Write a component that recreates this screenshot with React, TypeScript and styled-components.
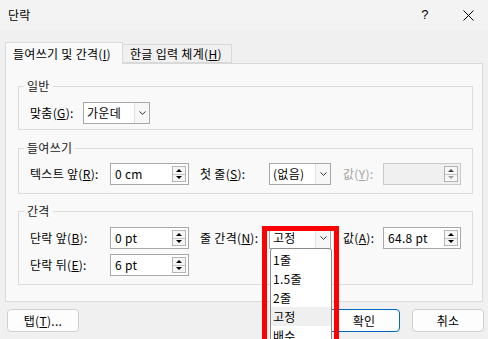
import React from 'react'
import styled, { createGlobalStyle } from 'styled-components'

const GlobalStyle = createGlobalStyle`
	html, body {
		margin: 0;
		padding: 0;
	}
	body {
		background: #f0f0f0;
		font-family: "Noto Sans CJK KR", "Noto Sans", sans-serif;
		font-size: 12px;
		line-height: 16px;
		letter-spacing: 0.3px;
		color: #000;
	}
`

const Dialog = styled.div`
	width: 488px;
	height: 339px;
	overflow: hidden;
	display: flex;
	flex-direction: column;
	background: #f0f0f0;
`

const TitleBar = styled.div`
	height: 30px;
	display: flex;
	align-items: center;
	padding-left: 8px;
	background: #f3f3f3;
`

const Title = styled.div`
	flex: 1;
	font-size: 12px;
`

const TitleButton = styled.div<{ $w: number }>`
	width: ${(p) => p.$w}px;
	height: 30px;
	display: flex;
	align-items: center;
	justify-content: center;
	font-size: 13px;
	font-family: "Liberation Sans", sans-serif;
`

const TabRow = styled.div`
	display: flex;
	align-items: flex-end;
	margin-top: 12px;
	padding-left: 5px;
	height: 21px;
	position: relative;
	z-index: 1;
`

const Tab = styled.div<{ $w: number; $active?: boolean }>`
	box-sizing: border-box;
	width: ${(p) => p.$w}px;
	height: ${(p) => (p.$active ? 22 : 19)}px;
	margin-bottom: ${(p) => (p.$active ? -1 : 0)}px;
	padding-left: 7px;
	display: flex;
	align-items: center;
	border: 1px solid #d9d9d9;
	border-bottom: ${(p) => (p.$active ? 'none' : '1px solid #d9d9d9')};
	border-left: ${(p) => (p.$active ? '1px solid #d9d9d9' : 'none')};
	background: ${(p) => (p.$active ? '#f9f9f9' : '#f0f0f0')};
	white-space: nowrap;
`

const Panel = styled.div`
	box-sizing: border-box;
	margin: 0 5px;
	height: 239px;
	border: 1px solid #d9d9d9;
	background: #f9f9f9;
	padding: 0 9px 0 12px;
	display: flex;
	flex-direction: column;
`

const Group = styled.fieldset<{ $top: number; $pt: number; $pb: number }>`
	margin: ${(p) => p.$top}px 0 0 0;
	padding: ${(p) => p.$pt}px 10px ${(p) => p.$pb}px 11px;
	border: 1px solid #dcdcdc;
	min-width: 0;
	display: flex;
	flex-direction: column;
	gap: 5px;
`

const Legend = styled.legend`
	margin-left: -6px;
	padding: 0 3px;
	line-height: 16px;
	color: #1a1a1a;
`

const Row = styled.div`
	display: flex;
	align-items: center;
	height: 22px;
`

const Label = styled.div<{ $w: number; $ml?: number; $disabled?: boolean }>`
	width: ${(p) => p.$w}px;
	margin-left: ${(p) => p.$ml ?? 0}px;
	color: ${(p) => (p.$disabled ? '#a3a3a3' : '#000')};
	white-space: nowrap;
`

const U = styled.span`
	text-decoration: underline;
	text-underline-offset: 1px;
`

const SpinBox = styled.div<{ $w: number; $disabled?: boolean }>`
	box-sizing: border-box;
	width: ${(p) => p.$w}px;
	height: 22px;
	padding: 2px;
	display: flex;
	align-items: center;
	border: 1px solid ${(p) => (p.$disabled ? '#c9c9c9' : '#a8a8a8')};
	background: ${(p) => (p.$disabled ? '#f0f0f0' : '#fff')};
`

const SpinText = styled.div`
	flex: 1;
	padding-left: 2px;
`

const SpinButtons = styled.div`
	box-sizing: border-box;
	width: 14px;
	height: 100%;
	display: flex;
	flex-direction: column;
	border: 1px solid #b4b4b4;
	background: #f6f6f6;
`

const SpinHalf = styled.div`
	flex: 1;
	display: flex;
	align-items: center;
	justify-content: center;
	& + & {
		border-top: 1px solid #c4c4c4;
	}
`

const ComboBox = styled.div<{ $w: number }>`
	position: relative;
	box-sizing: border-box;
	width: ${(p) => p.$w}px;
	height: 22px;
	display: flex;
	border: 1px solid #a8a8a8;
	background: #fff;
`

const ComboText = styled.div`
	flex: 1;
	padding-left: 3px;
	display: flex;
	align-items: center;
	white-space: nowrap;
`

const ComboArrow = styled.div`
	width: 14px;
	display: flex;
	align-items: center;
	justify-content: center;
	border-left: 1px solid #e2e2e2;
	background: #f7f7f7;
`

const DropList = styled.div`
	position: absolute;
	left: 0;
	top: 20px;
	width: 62px;
	box-sizing: border-box;
	border: 1px solid #8a8a8a;
	border-radius: 3px 3px 0 0;
	background: #fff;
	padding-top: 1px;
	z-index: 5;
`

const DropItem = styled.div<{ $hover?: boolean }>`
	height: 19px;
	padding-left: 2px;
	display: flex;
	align-items: center;
	background: ${(p) => (p.$hover ? '#efefef' : 'transparent')};
`

const Highlight = styled.div`
	position: absolute;
	left: -8px;
	top: -2px;
	width: 77px;
	height: 130px;
	box-sizing: border-box;
	border: 5px solid #ff0000;
	z-index: 6;
`

const Footer = styled.div`
	display: flex;
	align-items: center;
	margin-top: 7px;
	padding: 0 4px 0 7px;
	gap: 12px;
`

const Button = styled.div<{ $primary?: boolean }>`
	box-sizing: border-box;
	width: 72px;
	height: 23px;
	display: flex;
	align-items: center;
	justify-content: center;
	border: 1px solid ${(p) => (p.$primary ? '#0067c0' : '#d0d0d0')};
	border-radius: 4px;
	background: #fdfdfd;
`

const Spacer = styled.div`
	flex: 1;
`

const Up = ({ c = '#000' }: { c?: string }) => (
	<svg width="6" height="3" viewBox="0 0 6 3">
		<path d="M0 3 L3 0 L6 3 Z" fill={c} />
	</svg>
)

const Down = ({ c = '#000' }: { c?: string }) => (
	<svg width="6" height="3" viewBox="0 0 6 3">
		<path d="M0 0 L3 3 L6 0 Z" fill={c} />
	</svg>
)

const Chevron = () => (
	<svg width="7" height="4" viewBox="0 0 7 4">
		<path d="M0.5 0.5 L3.5 3.3 L6.5 0.5" stroke="#333" strokeWidth="1" fill="none" />
	</svg>
)

const Spin = ({ w, value, disabled }: { w: number; value?: string; disabled?: boolean }) => (
	<SpinBox $w={w} $disabled={disabled}>
		<SpinText>{value}</SpinText>
		<SpinButtons>
			<SpinHalf>
				<Up c={disabled ? '#444' : '#000'} />
			</SpinHalf>
			<SpinHalf>
				<Down c={disabled ? '#a0a0a0' : '#000'} />
			</SpinHalf>
		</SpinButtons>
	</SpinBox>
)

const Combo = ({ w, value, children }: { w: number; value: string; children?: React.ReactNode }) => (
	<ComboBox $w={w}>
		<ComboText>{value}</ComboText>
		<ComboArrow>
			<Chevron />
		</ComboArrow>
		{children}
	</ComboBox>
)

const lineOptions = ['1줄', '1.5줄', '2줄', '고정', '배수']

const App = () => {
	return (
		<Dialog>
			<GlobalStyle />
			<TitleBar>
				<Title>단락</Title>
				<TitleButton $w={46}>?</TitleButton>
				<TitleButton $w={40}>
					<svg width="11" height="11" viewBox="0 0 11 11">
						<path d="M0.5 0.5 L10.5 10.5 M10.5 0.5 L0.5 10.5" stroke="#000" strokeWidth="1" />
					</svg>
				</TitleButton>
			</TitleBar>

			<TabRow>
				<Tab $w={118} $active>
					들여쓰기 및 간격(<U>I</U>)
				</Tab>
				<Tab $w={109}>
					한글 입력 체계(<U>H</U>)
				</Tab>
			</TabRow>

			<Panel>
				<Group $top={14} $pt={8} $pb={5}>
					<Legend>일반</Legend>
					<Row>
						<Label $w={53}>
							맞춤(<U>G</U>):
						</Label>
						<Combo w={67} value="가운데" />
					</Row>
				</Group>

				<Group $top={10} $pt={7} $pb={8}>
					<Legend>들여쓰기</Legend>
					<Row>
						<Label $w={80}>
							텍스트 앞(<U>R</U>):
						</Label>
						<Spin w={79} value="0 cm" />
						<Label $w={69} $ml={11}>
							첫 줄(<U>S</U>):
						</Label>
						<Combo w={62} value="(없음)" />
						<Label $w={40} $ml={12} $disabled>
							값(<U>Y</U>):
						</Label>
						<Spin w={78} disabled />
					</Row>
				</Group>

				<Group $top={9} $pt={8} $pb={8}>
					<Legend>간격</Legend>
					<Row>
						<Label $w={80}>
							단락 앞(<U>B</U>):
						</Label>
						<Spin w={79} value="0 pt" />
						<Label $w={69} $ml={11}>
							줄 간격(<U>N</U>):
						</Label>
						<Combo w={62} value="고정">
							<DropList>
								{lineOptions.map((o) => (
									<DropItem key={o} $hover={o === '고정'}>
										{o}
									</DropItem>
								))}
							</DropList>
							<Highlight />
						</Combo>
						<Label $w={40} $ml={12}>
							값(<U>A</U>):
						</Label>
						<Spin w={78} value="64.8 pt" />
					</Row>
					<Row>
						<Label $w={80}>
							단락 뒤(<U>E</U>):
						</Label>
						<Spin w={79} value="6 pt" />
					</Row>
				</Group>
			</Panel>

			<Footer>
				<Button>
					탭(<U>T</U>)...
				</Button>
				<Spacer />
				<Button $primary>확인</Button>
				<Button>취소</Button>
			</Footer>
		</Dialog>
	)
}

export default App
